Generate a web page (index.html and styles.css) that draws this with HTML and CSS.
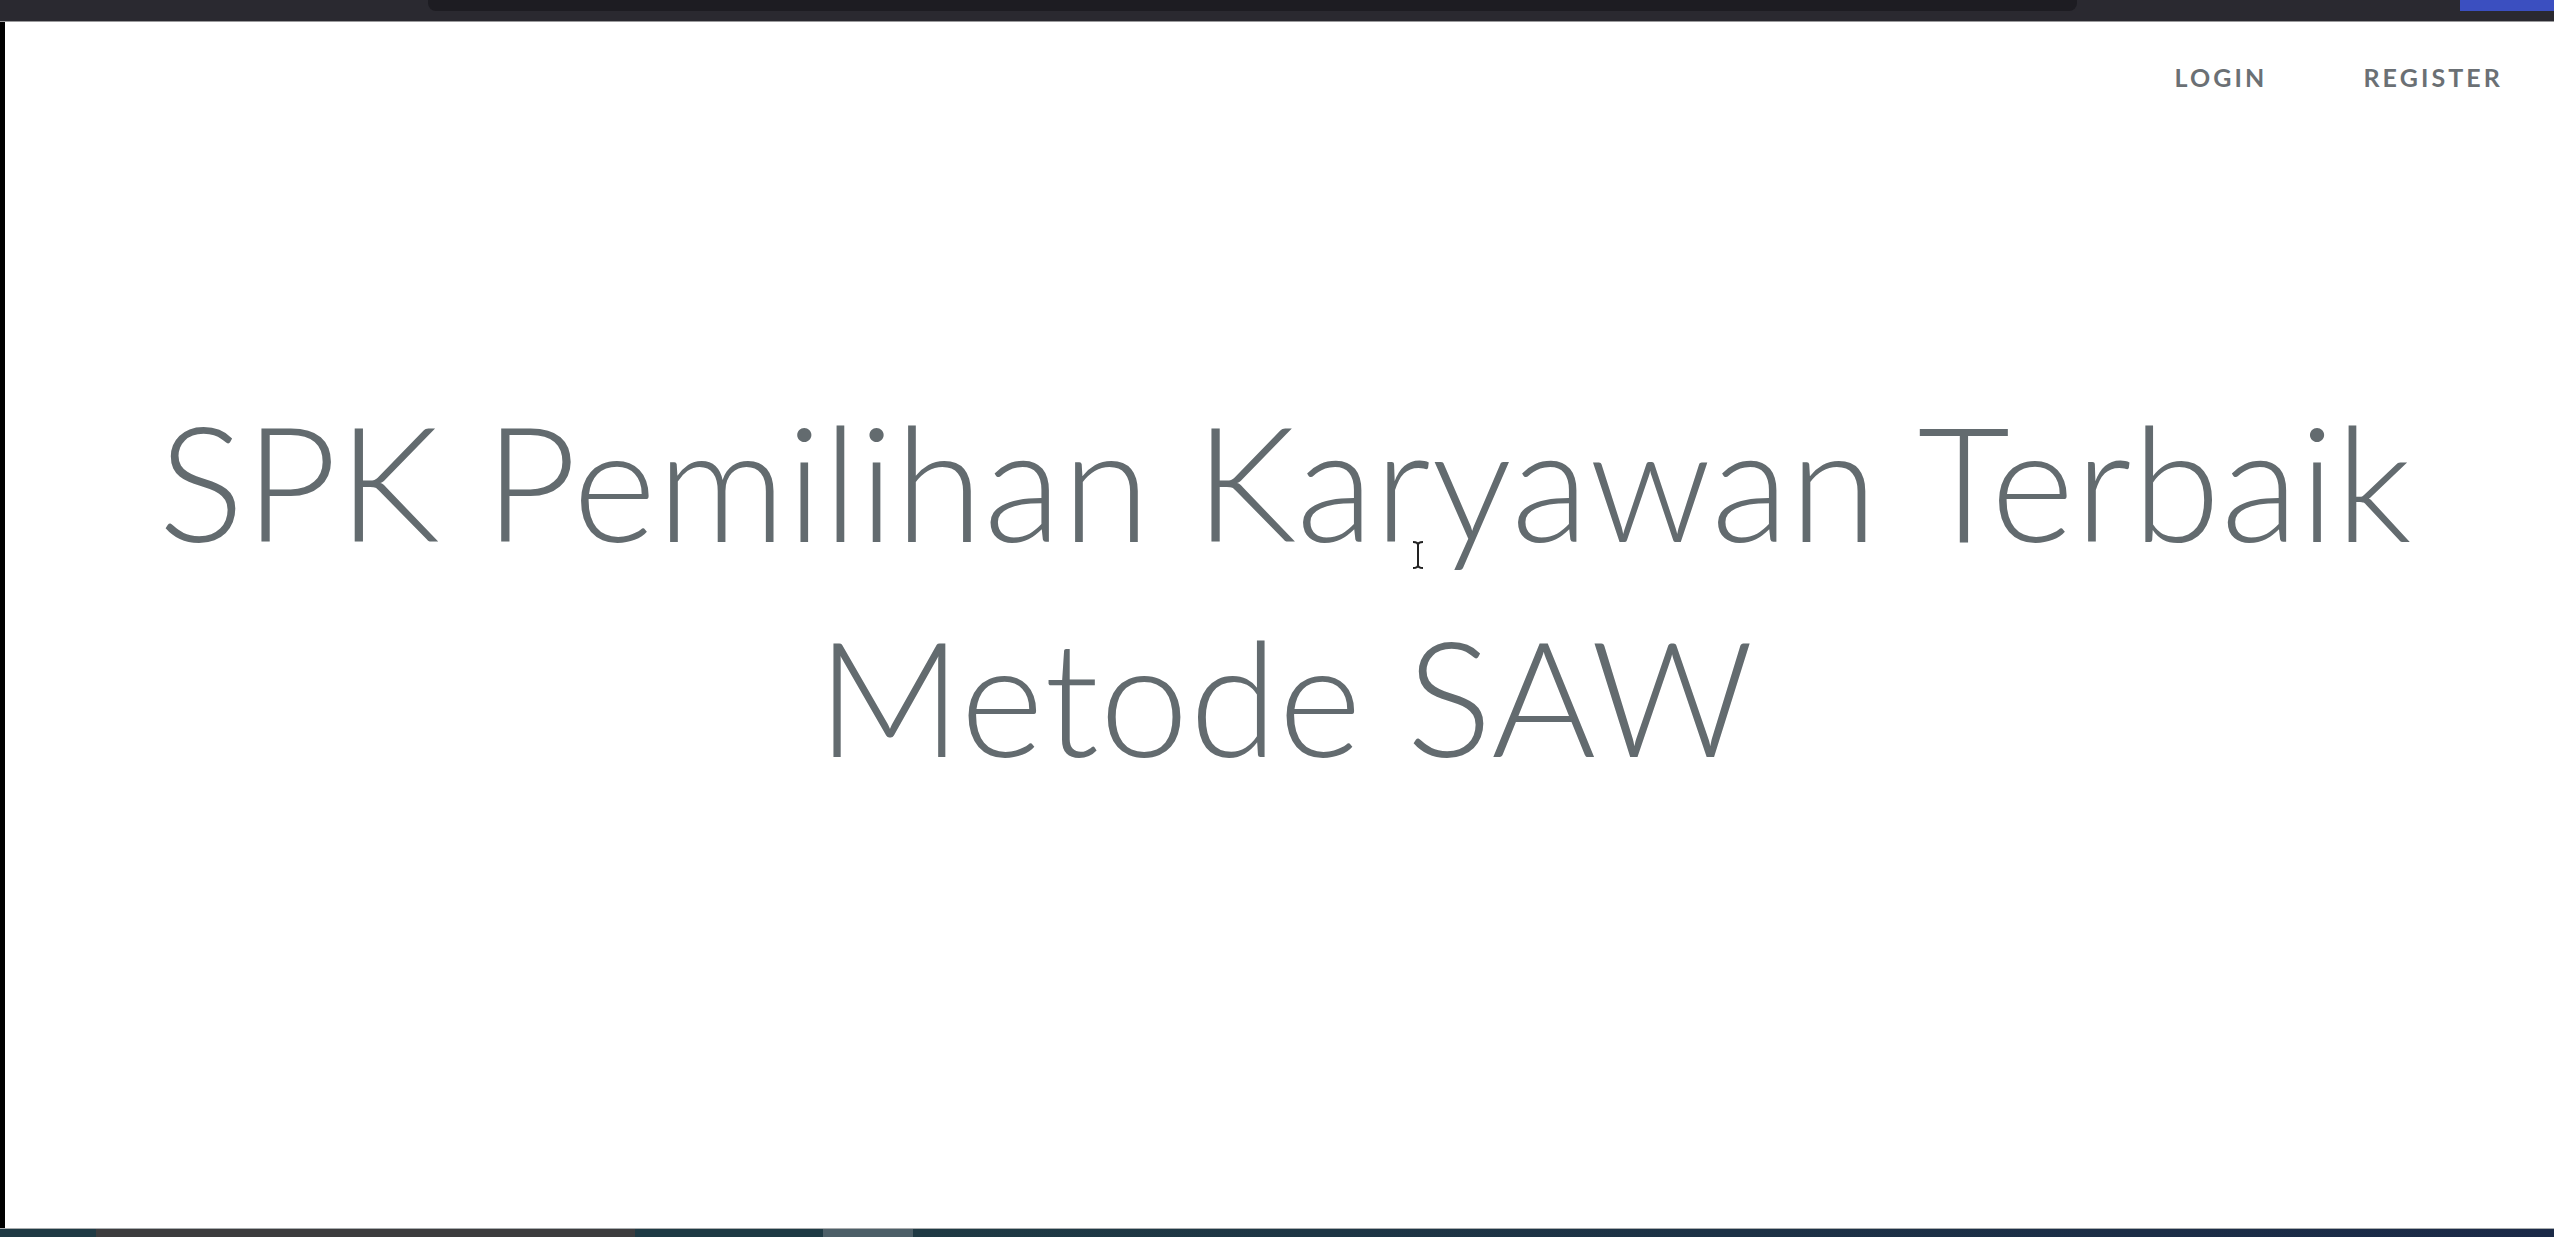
FILE: index.html
```html
<!DOCTYPE html>
<html lang="id">
<head>
<meta charset="utf-8">
<title>SPK Pemilihan Karyawan Terbaik Metode SAW</title>
<link rel="stylesheet" href="styles.css">
</head>
<body>
<div class="topbar">
  <div class="tabstrip"></div>
  <div class="topbar-fill"></div>
  <div class="blue-block"></div>
</div>
<div class="screen">
  <div class="left-edge"></div>
  <div class="page">
    <nav class="links">
      <a href="#">Login</a>
      <a href="#">Register</a>
    </nav>
    <main class="content">
      <h1 class="title">SPK Pemilihan Karyawan Terbaik<br>Metode SAW</h1>
    </main>
    <svg class="cursor" width="14" height="30" viewBox="0 0 14 30" aria-hidden="true">
      <path d="M2 2 Q7 2 7 5 Q7 2 12 2 M7 5 V25 M2 28 Q7 28 7 25 Q7 28 12 28" fill="none" stroke="#222" stroke-width="2"/>
    </svg>
  </div>
</div>
<div class="taskbar">
  <div class="tb tb1"></div>
  <div class="tb tb2"></div>
  <div class="tb tb3"></div>
  <div class="tb tb4"></div>
  <div class="tb tb5"></div>
</div>
</body>
</html>
```
FILE: styles.css
```css
html, body {
  margin: 0;
  height: 100%;
}
body {
  display: flex;
  flex-direction: column;
  overflow: hidden;
  background: #000;
  font-family: "Lato", "Open Sans", sans-serif;
}
.topbar {
  height: 21px;
  flex: none;
  display: flex;
  align-items: flex-start;
  background: #2a2930;
  border-bottom: 1px solid #9a9a9c;
}
.tabstrip {
  margin-left: 428px;
  width: 1649px;
  height: 11px;
  background: #1d1c22;
  border-radius: 0 0 8px 8px;
}
.topbar-fill {
  flex: 1;
}
.blue-block {
  width: 94px;
  height: 11px;
  background: #3b4fc0;
}
.screen {
  flex: 1;
  display: flex;
  min-height: 0;
}
.left-edge {
  width: 5px;
  background: #000;
}
.page {
  flex: 1;
  position: relative;
  background: #fff;
  display: flex;
  flex-direction: column;
}
.links {
  display: flex;
  justify-content: flex-end;
  padding: 38px 3px 0 0;
}
.links a {
  color: #6b7074;
  padding: 0 48px;
  font-size: 25px;
  font-weight: 700;
  letter-spacing: 3.1px;
  text-decoration: none;
  text-transform: uppercase;
  line-height: 34px;
}
.content {
  flex: 1;
  display: flex;
  align-items: center;
  justify-content: center;
  padding: 0 0 146px 12px;
}
.title {
  margin: 0;
  text-align: center;
  color: #636b6f;
  font-family: "Lato", "Open Sans", sans-serif;
  font-weight: 300;
  font-size: 160px;
  letter-spacing: 0.7px;
  line-height: 215px;
}
.cursor {
  position: absolute;
  left: 1406px;
  top: 518px;
}
.taskbar {
  height: 8px;
  flex: none;
  display: flex;
  border-top: 1px solid #a8acae;
}
.tb1 { width: 96px; background: #1f3a44; }
.tb2 { width: 539px; background: #3c3c3e; }
.tb3 { width: 188px; background: #1e3a44; }
.tb4 { width: 90px; background: #4d5f68; }
.tb5 { flex: 1; background: linear-gradient(90deg, #1f3a44, #1b2a48); }
```
